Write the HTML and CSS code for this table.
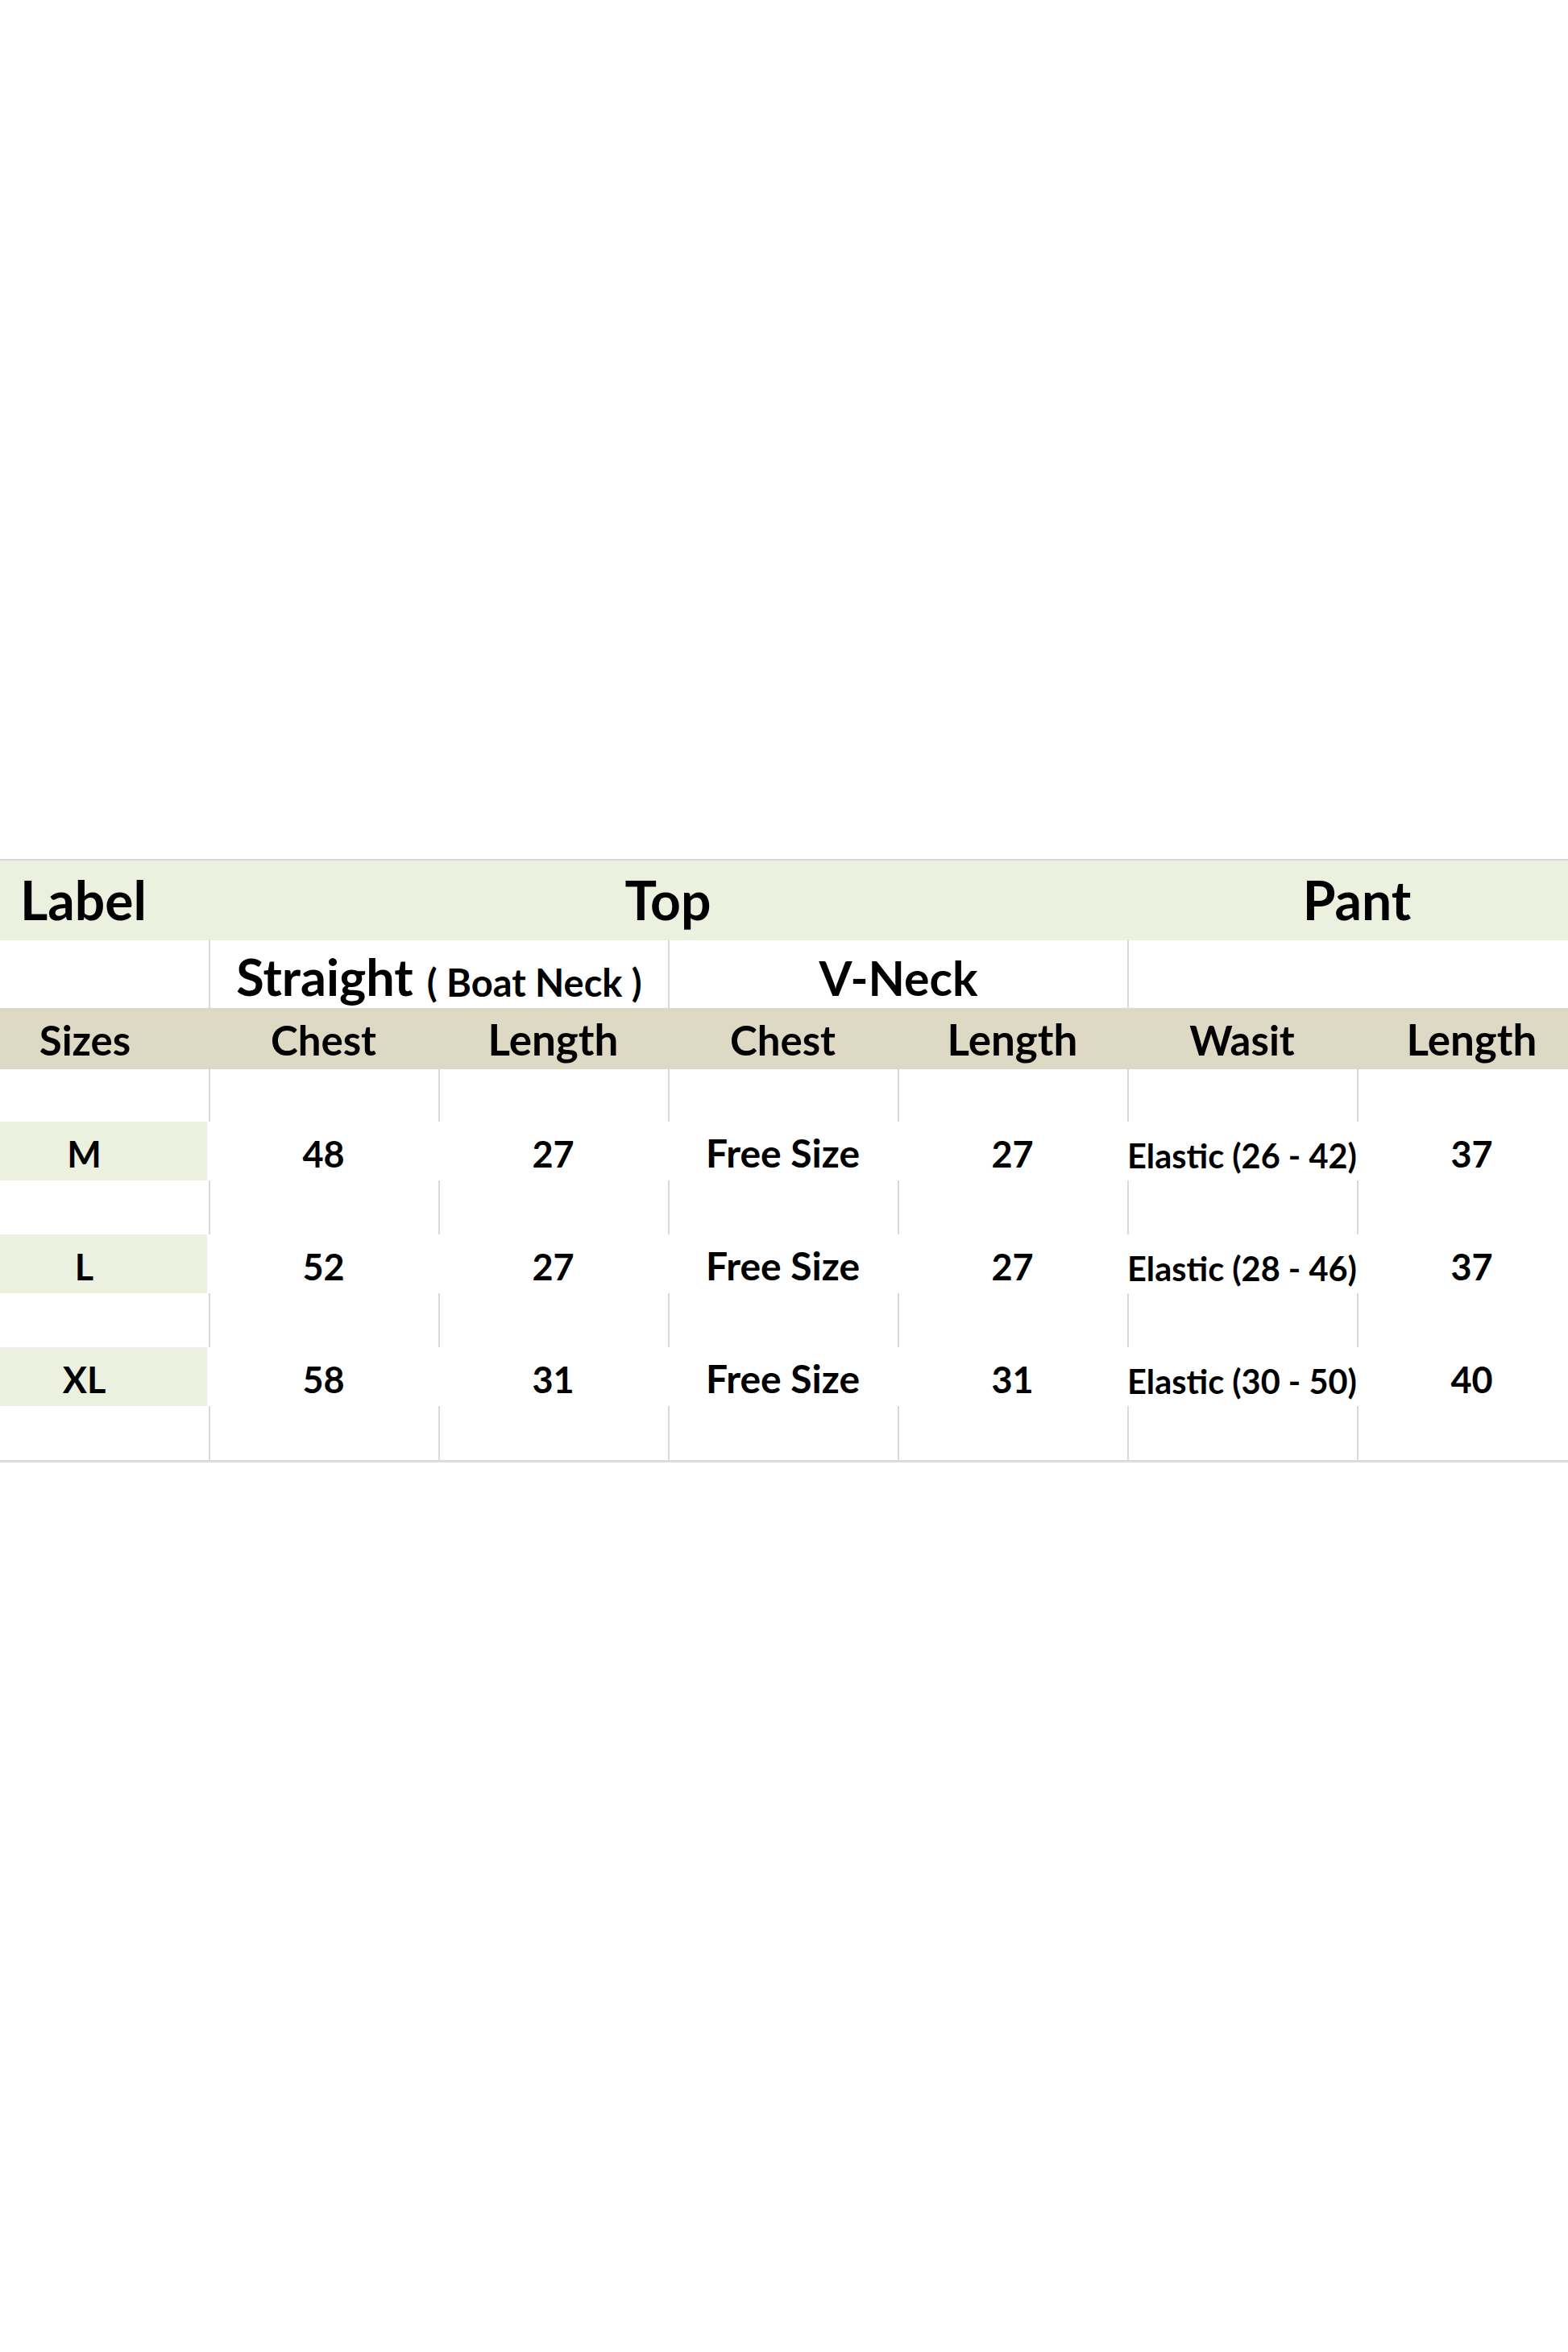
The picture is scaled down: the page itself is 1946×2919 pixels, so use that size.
FILE: index.html
```html
<!DOCTYPE html>
<html lang="en">
<head>
<meta charset="utf-8">
<title>Size Chart</title>
<link rel="stylesheet" href="styles.css">
</head>
<body>
<div class="page">
  <div class="sheet">
    <div class="row head1">
      <div class="cell first left big">Label</div>
      <div class="cell span4 big">Top</div>
      <div class="cell span2 big">Pant</div>
    </div>
    <div class="row head2">
      <div class="cell first"></div>
      <div class="cell span2 ruled sub straight">Straight<span class="note">( Boat Neck )</span></div>
      <div class="cell span2 ruled sub">V-Neck</div>
      <div class="cell span2 ruled"></div>
    </div>
    <div class="row head3">
      <div class="cell first colhead">Sizes</div>
      <div class="cell colhead">Chest</div>
      <div class="cell colhead wide">Length</div>
      <div class="cell colhead">Chest</div>
      <div class="cell colhead wide">Length</div>
      <div class="cell colhead">Wasit</div>
      <div class="cell colhead wide">Length</div>
    </div>

    <div class="row gap gap-first">
      <div class="cell first"></div><div class="cell ruled"></div><div class="cell ruled"></div><div class="cell ruled"></div><div class="cell ruled"></div><div class="cell ruled"></div><div class="cell ruled"></div>
    </div>
    <div class="row data">
      <div class="cell first size">M</div>
      <div class="cell val">48</div>
      <div class="cell val">27</div>
      <div class="cell val free">Free Size</div>
      <div class="cell val">27</div>
      <div class="cell val elastic">Elastic (26 - 42)</div>
      <div class="cell val">37</div>
    </div>

    <div class="row gap">
      <div class="cell first"></div><div class="cell ruled"></div><div class="cell ruled"></div><div class="cell ruled"></div><div class="cell ruled"></div><div class="cell ruled"></div><div class="cell ruled"></div>
    </div>
    <div class="row data">
      <div class="cell first size">L</div>
      <div class="cell val">52</div>
      <div class="cell val">27</div>
      <div class="cell val free">Free Size</div>
      <div class="cell val">27</div>
      <div class="cell val elastic">Elastic (28 - 46)</div>
      <div class="cell val">37</div>
    </div>

    <div class="row gap">
      <div class="cell first"></div><div class="cell ruled"></div><div class="cell ruled"></div><div class="cell ruled"></div><div class="cell ruled"></div><div class="cell ruled"></div><div class="cell ruled"></div>
    </div>
    <div class="row data">
      <div class="cell first size">XL</div>
      <div class="cell val">58</div>
      <div class="cell val">31</div>
      <div class="cell val free">Free Size</div>
      <div class="cell val">31</div>
      <div class="cell val elastic">Elastic (30 - 50)</div>
      <div class="cell val">40</div>
    </div>

    <div class="row gap">
      <div class="cell first"></div><div class="cell ruled"></div><div class="cell ruled"></div><div class="cell ruled"></div><div class="cell ruled"></div><div class="cell ruled"></div><div class="cell ruled"></div>
    </div>
  </div>
</div>
</body>
</html>
```

FILE: styles.css
```css
* { box-sizing: border-box; }

html, body {
  margin: 0;
  padding: 0;
  background: #ffffff;
}

.page {
  width: 1946px;
  height: 2919px;
  overflow: hidden;
  padding-top: 1066px;
  background: #ffffff;
  font-family: "Lato", "Open Sans", sans-serif;
  font-weight: 700;
  color: #000000;
}

.sheet {
  width: 1969px;
  border-top: 2px solid #d8d8d8;
  border-bottom: 3px solid #dcdcdc;
}

.row {
  display: grid;
  grid-template-columns: 259px repeat(6, 285px);
}

.cell {
  display: flex;
  align-items: flex-end;
  justify-content: center;
  line-height: 1;
  white-space: nowrap;
}

.span2 { grid-column: span 2; }
.span4 { grid-column: span 4; }

.ruled { border-left: 2px solid #d9d9d9; }

.first { padding-right: 48px; }

/* Header row 1 */
.head1 {
  height: 99px;
  background: #ebf1de;
}
.head1 .cell { padding-bottom: 17px; }
.big { font-size: 66px; }
.left {
  justify-content: flex-start;
  padding-left: 25px;
}

/* Header row 2 */
.head2 {
  height: 84px;
  background: #ffffff;
}
.head2 .cell { padding-bottom: 8px; }
.sub { font-size: 59px; }
.straight { font-size: 63px; }
.note {
  font-size: 47px;
  margin-left: 17px;
}

/* Header row 3 */
.head3 {
  height: 76px;
  background: #ddd9c4;
}
.head3 .cell { padding-bottom: 11px; }
.colhead { font-size: 51px; }
.colhead.wide { font-size: 53px; }

/* Body rows */
.gap { height: 67px; }
.gap-first { height: 65px; }

.data { height: 73px; }
.data .cell {
  padding-bottom: 10px;
  font-size: 45px;
  background: #ffffff;
}
.data .size {
  background: #ebf1de;
  margin-right: 2px;
}
.data .free { font-size: 48px; }
.data .elastic { font-size: 41.5px; }
```
